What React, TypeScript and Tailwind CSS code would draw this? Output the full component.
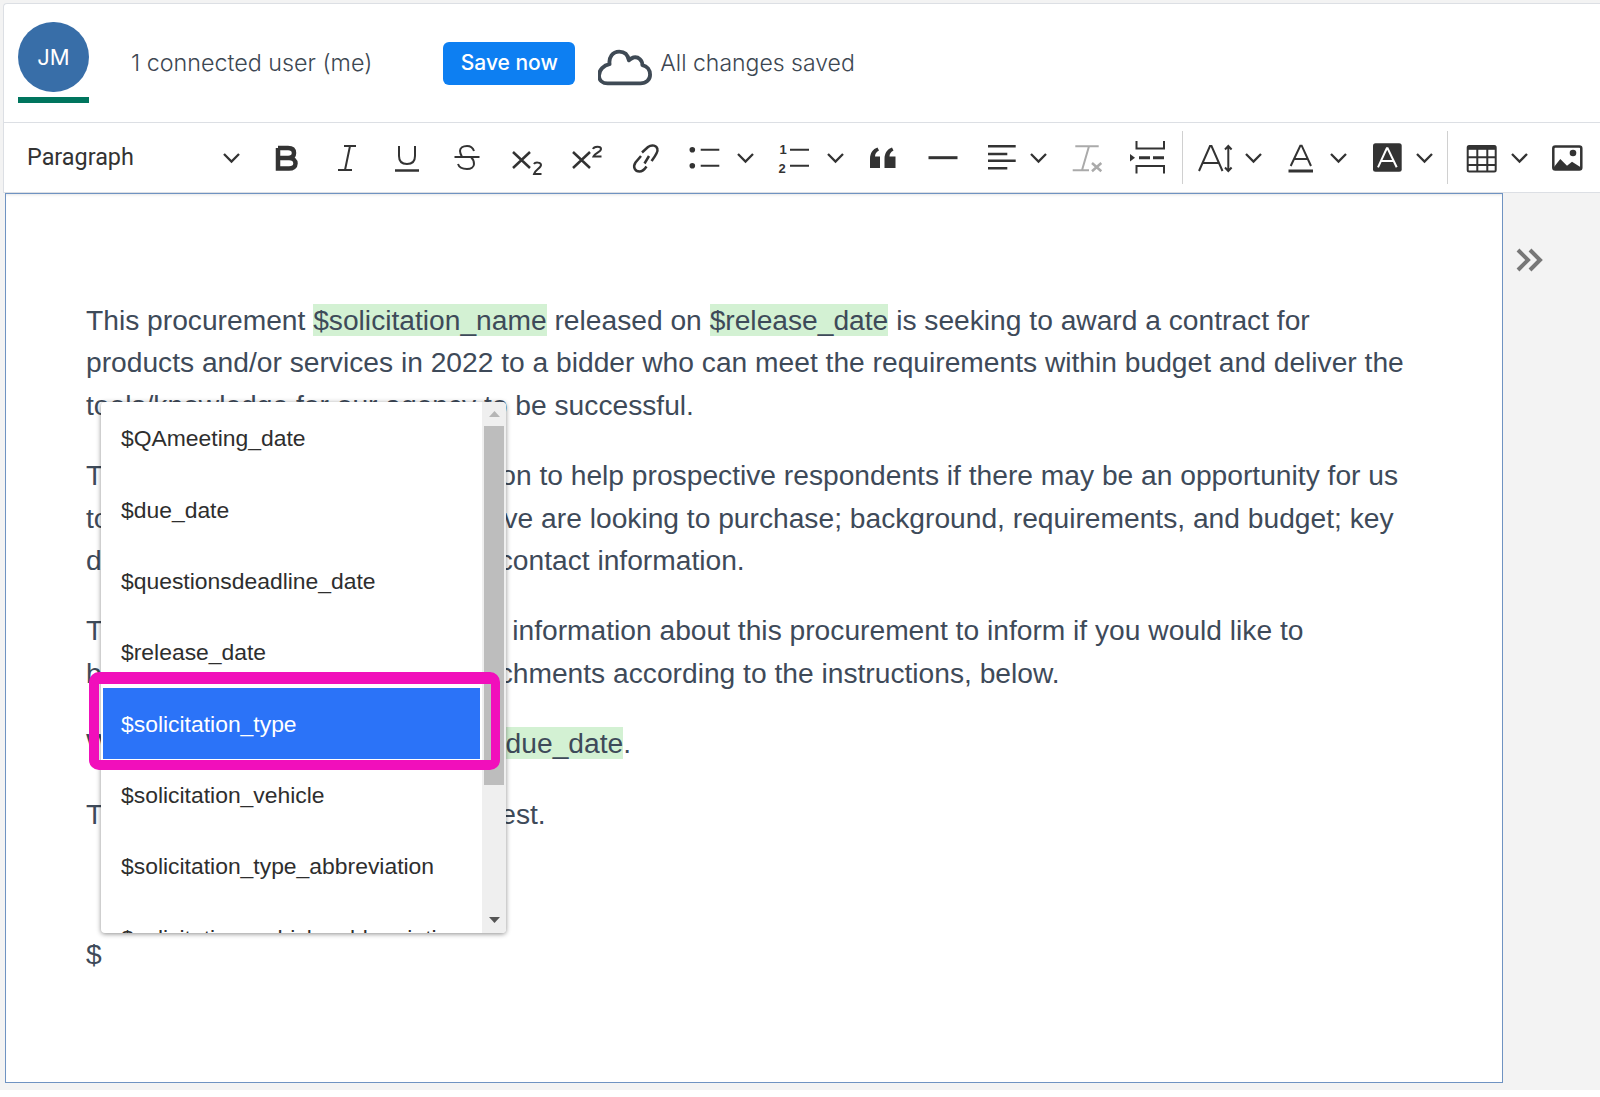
import type { ReactNode } from 'react'

function Caret() {
  return (
    <svg width="21" height="21" viewBox="0 0 21 21" fill="none" stroke="#333" strokeWidth="2.300" className="shrink-0">
      <path d="M3 7l7.500 7.500L18 7" />
    </svg>
  )
}

function Ico({ w = 34, children }: { w?: number; children: ReactNode }) {
  return (
    <svg width={w} height={34} viewBox={`0 0 ${w} 34`} fill="none" stroke="#333" strokeWidth="2" className="shrink-0">
      {children}
    </svg>
  )
}

// keeps the place of the words that the popup covers
const Covered = ({ w }: { w: string }) => <span className={`inline-block h-px align-baseline ${w}`} />

const Tag = ({ children }: { children: ReactNode }) => <span className="bg-[#d3f1d3]">{children}</span>

const ITEMS = [
  '$QAmeeting_date',
  '$due_date',
  '$questionsdeadline_date',
  '$release_date',
  '$solicitation_type',
  '$solicitation_vehicle',
  '$solicitation_type_abbreviation',
  '$solicitation_vehicle_abbreviation',
]

export default function App() {
  return (
    <div className="w-[1600px] h-[1097px] overflow-hidden bg-white font-['Liberation_Sans',Arial,sans-serif]">
      <div className="h-[1090px] bg-[#f3f3f3] pt-[3px] pl-[3px]">
        <header className="h-[119px] bg-white border-t border-l border-[#dcdfe4] rounded-tl flex items-start pl-[14px]">
          <div className="w-[71px] mt-[18px]">
            <div className="w-[71px] h-[70px] rounded-full bg-[#386ea8] text-white text-[22px] flex items-center justify-center font-['Inter']">JM</div>
            <div className="h-[6px] mt-[5px] bg-[#00755e]" />
          </div>
          <span className="ml-[42px] mt-[44px] text-[23.300px] leading-[30px] text-[#3d4752] font-['Inter'] font-light">1 connected user (me)</span>
          <button className="ml-[71px] mt-[38px] w-[132px] h-[43px] rounded-md bg-[#0d7ff2] text-white text-[21px] pb-[2px] font-['Inter'] font-medium">Save now</button>
          <svg width="54" height="40" viewBox="0 0 56 40" fill="none" stroke="#3f4a55" strokeWidth="4" strokeLinejoin="round" className="ml-[23px] mt-[44px]">
            <path d="M12 36H44c6 0 10-4 10-9 0-5-3-9-8-10 0-5-4-9-9-8-2.500 1-4 2-5 3-1-6-5-9-10-9-7 0-11 6-10 13-6 1-11 6-11 12 0 5 4 8 9 8z" />
          </svg>
          <span className="ml-[8px] mt-[44px] text-[23px] leading-[30px] text-[#3d4752] font-['Inter'] font-light">All changes saved</span>
        </header>

        <div className="h-[70px] bg-white border-t border-l border-[#dcdfe4] flex items-center pl-[23px]">
          <span className="w-[194px] text-[23.400px] text-[#333] font-['Roboto']">Paragraph</span>
          <Caret />
          <div className="ml-[28px] flex items-center gap-[26px]">
            <Ico><path d="M8 7h10c4 0 6 2 6 5s-2 5-6 5H8M8 17h11c4 0 6.500 2.500 6.500 5.500S23 27.500 19 27.500H8V7z" strokeWidth="4.500" /></Ico>
            <Ico><path d="M14 5h12M8 29h14M20 5l-5 24" /></Ico>
            <Ico><path d="M9 5v10c0 5 3 8 8 8s8-3 8-8V5" /><path d="M5 29.500h24" strokeWidth="2.500" /></Ico>
            <Ico><path d="M24 10c-1-3-4-5-7-5-4 0-7 2-7 5 0 2 1 4 2 6M8 23c1 3 4 5 9 5 4 0 7-2 7-5 0-3-1-5-3-7M4.500 16h25" /></Ico>
            <Ico><path d="M3 11l17 16M20 11L3 27" strokeWidth="2.500" /><path d="M24 23c1-2 7-2 7 1 0 3-6 5-7 9h7.500" /></Ico>
            <Ico><path d="M3 11l17 16M20 11L3 27" strokeWidth="2.500" /><path d="M23 8c1-3 8-3 8 0 0 3-6 4-7.500 7.500h8" /></Ico>
            <Ico><path d="M11 15L5.500 21.500C2.500 26 5 30.500 9.500 30.500c3 0 5-2 7-5M12 11.500l6-5.500c4-3 9-1.500 9.500 2.500.5 3-2 6-6 11.500M14.500 22.500L19 15" strokeWidth="2.500" /></Ico>
          </div>
          <div className="ml-[23px] flex items-center">
            <Ico><circle cx="5.300" cy="8.700" r="2.800" fill="#333" stroke="none" /><circle cx="5.300" cy="24.700" r="2.800" fill="#333" stroke="none" /><path d="M13.700 8.700h18.600M13.700 24.700h18.600" /></Ico>
            <span className="ml-[14px]"><Caret /></span>
          </div>
          <div className="ml-[21px] flex items-center">
            <Ico>
              <text x="2.500" y="13" fontSize="13" fontWeight="700" fill="#333" stroke="none">1</text>
              <text x="1.500" y="32" fontSize="13" fontWeight="700" fill="#333" stroke="none">2</text>
              <path d="M13 8.700h19M13 24.700h19" />
            </Ico>
            <span className="ml-[14px]"><Caret /></span>
          </div>
          <div className="ml-[20px]"><Ico><path d="M4 27V18c0-6 3-10 7.500-11.500l1.500 3c-3 1.500-4 3.500-4 6h5V27zM18.500 27V18c0-6 3-10 7.500-11.500l1.500 3c-3 1.500-4 3.500-4 6h6V27z" fill="#333" stroke="none" /></Ico></div>
          <div className="ml-[26px]"><Ico><path d="M2.500 16.700h29" strokeWidth="3" /></Ico></div>
          <div className="ml-[24px] flex items-center">
            <Ico><path d="M4 5.300h27.700M4 13h19.300M4 19.700h27.700M4 27.300h19.300" strokeWidth="2.500" /></Ico>
            <span className="ml-[10px]"><Caret /></span>
          </div>
          <div className="ml-[21px]">
            <Ico>
              <path d="M5.300 5.300h23.400M19 5.300l-7 24M2.700 29.300H19" stroke="#aaa" />
              <path d="M22 22l9.300 8.300M31.300 22L22 30.300" stroke="#aaa" strokeWidth="2.500" />
            </Ico>
          </div>
          <div className="ml-[26px]">
            <Ico w={36}>
              <path d="M6.500 0v7.500H34V0M6.500 32.500V25H34v7.500" />
              <path d="M9 16.700h11M23 16.700h11" strokeWidth="3" />
              <path d="M0 13l5 3.700-5 3.700z" fill="#333" stroke="none" />
            </Ico>
          </div>
          <div className="ml-[16px] w-px h-[53px] bg-[#d0d0d0]" />
          <div className="ml-[13px] flex items-center">
            <Ico w={38}>
              <path d="M3 30L14 5h1.500L26.500 30M7 22h16" />
              <path d="M32.300 5v25M29 8.500l3.300-3.500 3.300 3.500M29 26.500l3.300 3.500 3.300-3.500" />
            </Ico>
            <span className="ml-[9px]"><Caret /></span>
          </div>
          <div className="ml-[20px] flex items-center">
            <Ico><path d="M6.700 25L16.300 4.700h1.400L27 25M10 18h14" /><path d="M4.500 30h24.500" strokeWidth="3" /></Ico>
            <span className="ml-[10px]"><Caret /></span>
          </div>
          <div className="ml-[21px] flex items-center">
            <Ico><rect x="3" y="2.300" width="28.700" height="28.400" rx="2.500" fill="#333" stroke="none" /><path d="M8 26.300L16.800 7.300h.8L26.700 26.300M11 20h12.500" stroke="#fff" /></Ico>
            <span className="ml-[10px]"><Caret /></span>
          </div>
          <div className="ml-[12px] w-px h-[53px] bg-[#d0d0d0]" />
          <div className="ml-[17px] flex items-center">
            <Ico><rect x="2.700" y="5" width="28" height="25.500" rx="1.500" /><path d="M2.700 6.800h28" strokeWidth="4" /><path d="M2.700 16.300h28M2.700 24h28M12.300 8v22M22.300 8v22" /></Ico>
            <span className="ml-[10px]"><Caret /></span>
          </div>
          <div className="ml-[21px]">
            <Ico><rect x="2.300" y="5.500" width="28" height="23" rx="2" strokeWidth="2.500" /><path d="M3 26l6.300-8 6.700 6.700 5-4 8.300 5.300v3H3z" fill="#333" stroke="none" /><circle cx="22" cy="12" r="3.300" fill="#333" stroke="none" /></Ico>
          </div>
        </div>

        <main className="relative flex h-[898px] border-t border-[#dcdfe4]">
          <div className="w-[1498px] ml-[2px] h-[890px] bg-white border border-[#6f93c2] shadow-[inset_0_3px_3px_-2px_rgba(0,0,0,0.1)] pl-[80px] pt-[105px] text-[28.200px] leading-[42.400px] text-[#3e4a59]">
            <p className="mb-[28px]">
              This procurement <Tag>$solicitation_name</Tag> released on <Tag>$release_date</Tag> is seeking to award a contract for<br />
              products and/or services in 2022 to a bidder who can meet the requirements within budget and deliver the<br />
              tools/knowledge for our agency to be successful.
            </p>
            <p className="mb-[28px]">
              T<Covered w="w-[397px]" />on to help prospective respondents if there may be an opportunity for us<br />
              to<Covered w="w-[394px]" />ve are looking to purchase; background, requirements, and budget; key<br />
              d<Covered w="w-[397px]" />contact information.
            </p>
            <p className="mb-[28px]">
              T<Covered w="w-[409px]" />information about this procurement to inform if you would like to<br />
              b<Covered w="w-[397px]" />chments according to the instructions, below.
            </p>
            <p className="mb-[28px]">
              W<Tag><Covered w="w-[393px]" />due_date</Tag>.
            </p>
            <p className="mb-[98px]">
              T<Covered w="w-[397px]" />est.
            </p>
            <p>$</p>
          </div>
          <div className="flex-1 pt-[54px] pl-[12px]">
            <svg width="30" height="26" viewBox="0 0 30 26" fill="none" stroke="#777" strokeWidth="4"><path d="M3 3l10 10L3 23M15 3l10 10-10 10" /></svg>
          </div>

          {/* mention dropdown */}
          <div className="absolute left-[98px] top-[209px] w-[405px] h-[531px] bg-white rounded shadow-[0_1px_5px_rgba(0,0,0,0.45)] overflow-hidden flex text-[22.900px] text-[#2e2e2e]">
            <ul className="w-[381px] pt-px">
              {ITEMS.map((it, i) => (
                <li key={it} className={`h-[71.300px] flex items-center ${i === 4 ? 'bg-[#2b73f8] text-white mx-[2px] pl-[18px]' : 'pl-[20px]'}`}>{it}</li>
              ))}
            </ul>
            <div className="w-[24px] flex flex-col bg-[#efefef]">
              <div className="h-[24px] flex items-center justify-center">
                <svg width="11" height="6" viewBox="0 0 11 6" fill="#b5b5b5"><path d="M5.500 0L11 6H0z" /></svg>
              </div>
              <div className="h-[359px] w-[20px] mx-auto bg-[#bdbdbd]" />
              <div className="flex-1 flex items-end justify-center pb-[10px]">
                <svg width="11" height="6" viewBox="0 0 11 6" fill="#555"><path d="M5.500 6L11 0H0z" /></svg>
              </div>
            </div>
          </div>
          <div className="absolute left-[86px] top-[479px] w-[411px] h-[98px] rounded-[10px] border-t-[12px] border-l-[10px] border-r-[9px] border-b-[10px] border-[#f10fbb]" />
        </main>
      </div>
    </div>
  )
}
